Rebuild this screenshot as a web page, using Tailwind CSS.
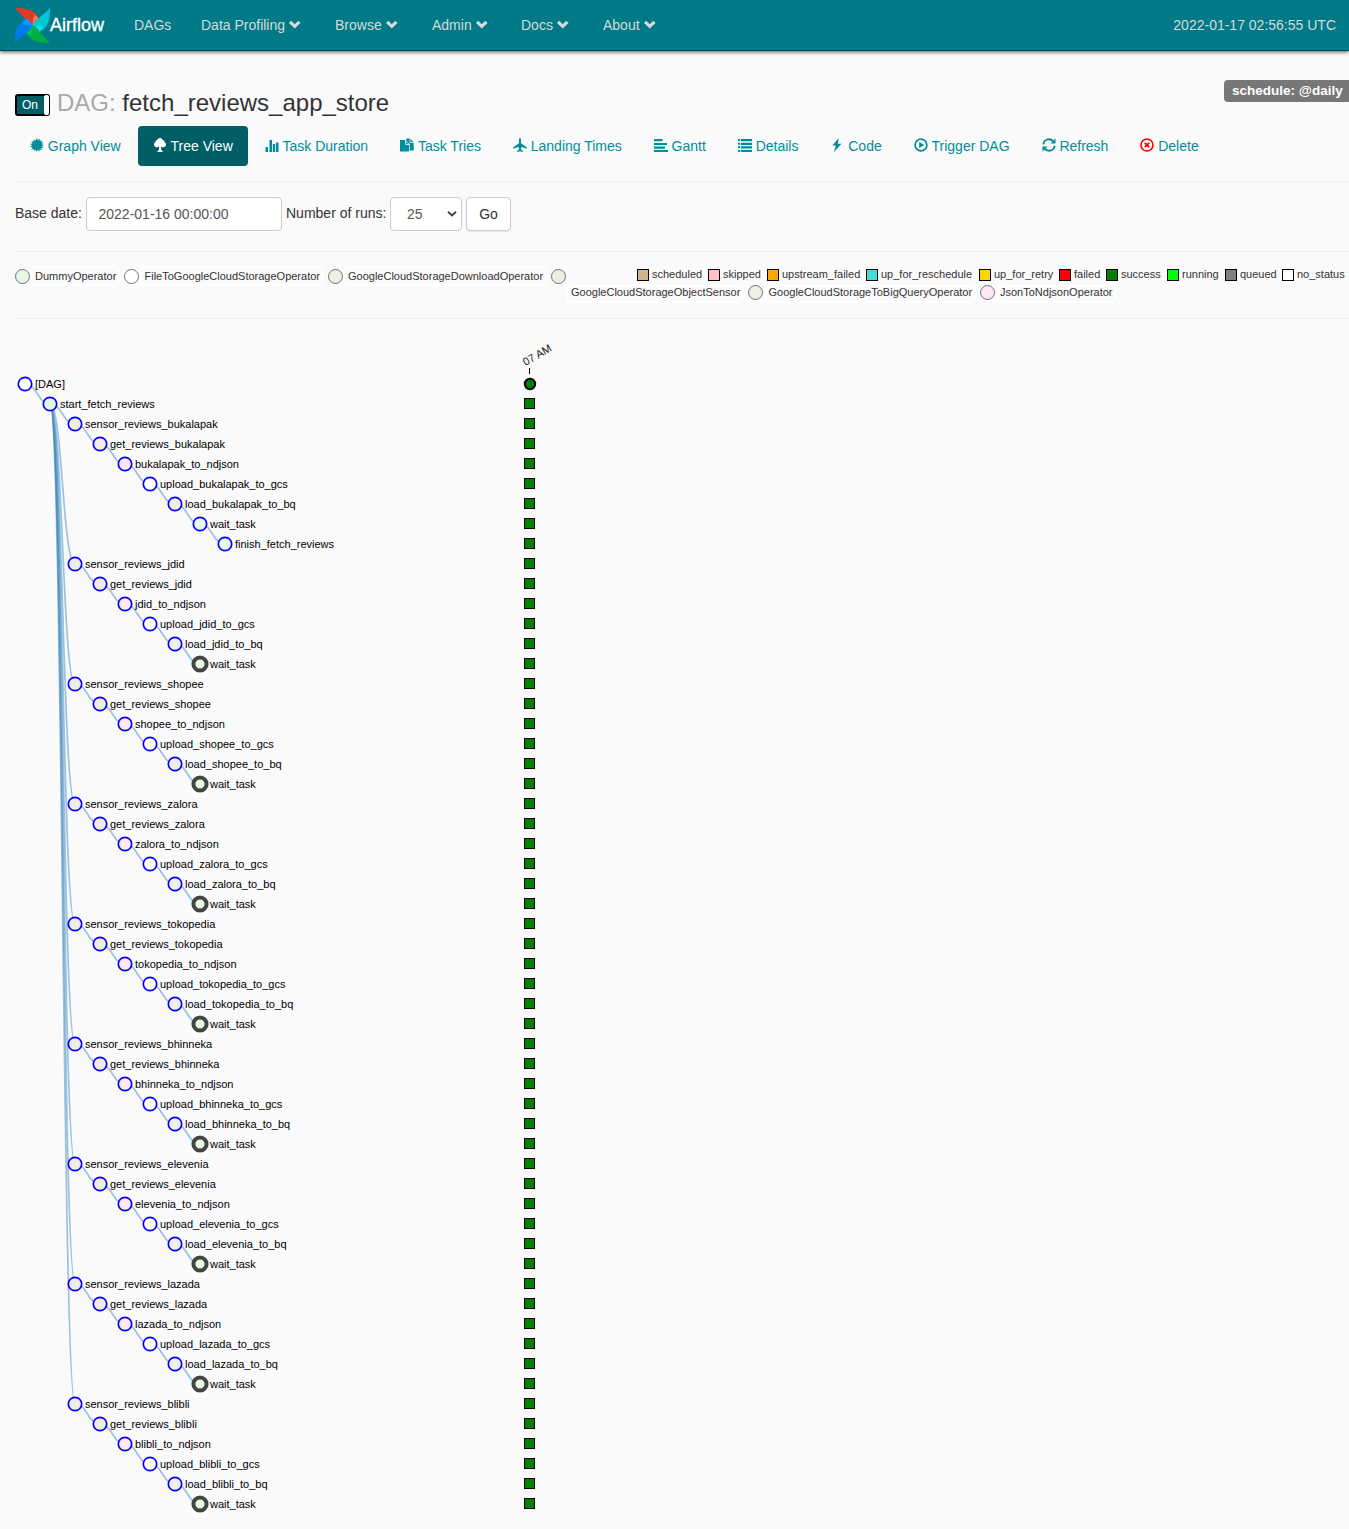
<!DOCTYPE html>
<html lang="en">
<head>
<meta charset="utf-8">
<title>Airflow - DAG: fetch_reviews_app_store</title>
<script src="https://cdn.jsdelivr.net/npm/@tailwindcss/browser@4"></script>
</head>
<body class="w-[1349px] h-[1529px] overflow-hidden bg-[#fafafa] font-['Liberation_Sans',Arial,sans-serif] text-sm leading-5 text-[#333]">
<svg class="hidden">
  <symbol id="chev" viewBox="0 0 14 14"><path d="M1 5.200 3.300 2.900 7 6.400 10.700 2.900 13 5.200 7 10.900z"/></symbol>
  <symbol id="graph" viewBox="0 0 14 14"><path d="M7 0 7.900 2.400 9.700.6 9.800 3.100 12.200 1.900 11.100 4.200 13.700 4.300 11.700 6.100 14 7.200 11.600 8.100 13.400 9.900 10.900 10 11.900 12.200 9.600 11.300 9.300 13.700 7.600 11.800 6.400 14 5.600 11.600 3.700 13.300 3.700 10.700 1.400 11.500 2.500 9.300 0 8.800 2.100 7.400.1 5.700 2.600 5.500 1.200 3.200 3.700 3.700 3.400 1.200 5.400 2.700z"/></symbol>
  <symbol id="tree" viewBox="0 0 14 14"><path d="M7 0c1.6 0 2.4.8 2.6 1.9 1.5.2 2.1 1.1 1.9 2.2 1 .6 1.500 1.400 1.500 2.400 0 1.800-1.400 2.800-3 2.800-.8 0-1.400-.2-1.900-.7v3.400l1.600.9V14H4.400v-1.100L6 12V8.600c-.5.5-1.200.7-2 .7-1.700 0-3-1-3-2.800 0-1 .5-1.800 1.500-2.400-.2-1.100.4-2 1.900-2.200C4.600.8 5.400 0 7 0z"/></symbol>
  <symbol id="bars" viewBox="0 0 14 14"><path d="M.5 8H3v5H.5zM4.500 1H7v12H4.500zM7.800 5h2.400v8H7.800zM11 3.500h2.500V13H11z"/></symbol>
  <symbol id="dup" viewBox="0 0 14 14"><path d="M0 2h5l.8.9V7H9v6.500H0z"/><path d="M6.300.5h3.400V5h4v7.500H9.700V6.300L6.300 3.500zM10.500.7l3.200 3.500h-3.200z"/><path d="M5.500 2.400 9 6.400H5.500z" stroke="#fafafa" stroke-width=".7"/></symbol>
  <symbol id="plane" viewBox="0 0 14 14"><path d="M6 1.500C6.200.5 6.600 0 7 0s.8.500 1 1.500v3.700l5.700 4v1.600L8.400 8.800 8.100 11.400l1.900 1.500V14L7.600 13.300 7 14l-.6-.7L4 14v-1.100l1.900-1.500-.3-2.600L.3 10.800V9.200l5.700-4z"/></symbol>
  <symbol id="gantt" viewBox="0 0 14 14"><path d="M0 0h8.500v2.200H0zM0 4h13v2H0zM0 7.500h11v2.200H0zM0 11h14v2H0z"/></symbol>
  <symbol id="list" viewBox="0 0 14 14"><path d="M0 0h2.200v2H0zM3 0h11v2.200H3zM0 3.700h2.200v2H0zM3 3.700h11v2.300H3zM0 7.300h2.200v2H0zM3 7.300h11v2.300H3zM0 11h2.200v2H0zM3 11h11v2H3z"/></symbol>
  <symbol id="flash" viewBox="0 0 14 14"><path d="M8.800 0 2.300 7.600h3.500L4 14l7.500-8.200H7.800z"/></symbol>
  <symbol id="play" viewBox="0 0 14 14"><circle cx="7" cy="7" r="5.900" fill="none" stroke="currentColor" stroke-width="1.700"/><path d="M5.200 4 10.200 7l-5 3z"/></symbol>
  <symbol id="refresh" viewBox="0 0 14 14"><path d="M1.400 6.400C1.500 3.400 4 1.300 7 1.300c1.900 0 3.300.8 4.300 2M12.600 7.600c-.1 3-2.600 5.100-5.600 5.100-1.900 0-3.300-.8-4.300-2" fill="none" stroke="currentColor" stroke-width="1.900"/><path d="M13.500.4v5H8.500zM.5 13.600v-5h5z"/></symbol>
  <symbol id="del" viewBox="0 0 14 14"><circle cx="7" cy="7" r="6" fill="none" stroke="currentColor" stroke-width="1.600"/><path d="M4.800 4.800l4.400 4.400M9.200 4.800 4.800 9.200" stroke="currentColor" stroke-width="1.900"/></symbol>
  <symbol id="blade" viewBox="0 0 35 35"><path d="M0 0C12 0 21.500 2 24.500 12.500L17.500 17.500C12 17 11 10 0 0z"/></symbol>
  <symbol id="fold" viewBox="0 0 35 35"><path d="M19.500 7C22.500 8.500 24 10.500 24.500 12.500L17.500 17.500C17.800 13.500 18 10 19.500 7z"/></symbol>
</svg>

<nav class="flex h-[51px] items-center border-b border-[#004a52] bg-[#007a87] pl-[15px] pr-[13px] text-[#d9d9d9] shadow-[0_1px_4px_rgba(0,0,0,0.65)]">
  <svg class="size-[35px] shrink-0" viewBox="0 0 35 35">
    <g><use href="#blade" width="35" height="35" fill="#e43921"/><use href="#fold" width="35" height="35" fill="#ff7557"/></g>
    <g transform="rotate(90 17.5 17.5)"><use href="#blade" width="35" height="35" fill="#00c7d4"/><use href="#fold" width="35" height="35" fill="#11e1ee"/></g>
    <g transform="rotate(180 17.5 17.5)"><use href="#blade" width="35" height="35" fill="#00ad46"/><use href="#fold" width="35" height="35" fill="#04c659"/></g>
    <g transform="rotate(270 17.5 17.5)"><use href="#blade" width="35" height="35" fill="#017cee"/><use href="#fold" width="35" height="35" fill="#0c96ff"/></g>
  </svg>
  <span class="w-[84px] text-lg text-white [-webkit-text-stroke:0.3px_white]">Airflow</span>
  <span class="w-[67px]">DAGs</span>
  <span class="flex w-[134px] items-center gap-[3px]">Data Profiling <svg class="size-[13.5px] fill-current"><use href="#chev"/></svg></span>
  <span class="flex w-[97px] items-center gap-[3px]">Browse <svg class="size-[13.5px] fill-current"><use href="#chev"/></svg></span>
  <span class="flex w-[89px] items-center gap-[3px]">Admin <svg class="size-[13.5px] fill-current"><use href="#chev"/></svg></span>
  <span class="flex w-[82px] items-center gap-[3px]">Docs <svg class="size-[13.5px] fill-current"><use href="#chev"/></svg></span>
  <span class="flex items-center gap-[3px]">About <svg class="size-[13.5px] fill-current"><use href="#chev"/></svg></span>
  <span class="ml-auto">2022-01-17 02:56:55 UTC</span>
</nav>

<main class="pl-[15px]">
  <header class="flex h-[75px] items-start pt-[29px]">
    <div class="mt-[14px] flex h-[22px] w-[35px] rounded-[3px] border-2 border-black bg-[#005e66] text-xs leading-[19px] text-white">
      <span class="w-[27px] pl-[5px]">On</span><span class="-my-px -mr-px flex-1 rounded-[2px] bg-white"></span>
    </div>
    <h3 class="ml-[7px] mt-[10px] text-2xl leading-[26px]"><span class="text-[#aaa]">DAG:</span> fetch_reviews_app_store</h3>
    <span class="ml-auto h-[22px] w-[125px] rounded-l-[4px] bg-[#777] pl-2 text-[13.5px] font-bold leading-[21px] text-white">schedule: @daily</span>
  </header>

  <ul class="flex h-10 gap-[2px] text-[#018d9c] [&>li]:flex [&>li]:items-center [&>li]:gap-[3.8px] [&>li]:px-[15px] [&_svg]:size-[14px] [&_svg]:fill-current">
    <li><svg class="-mt-[2px]"><use href="#graph"/></svg>Graph View</li>
    <li class="rounded bg-[#005e66] text-white"><svg class="-mt-[2px]"><use href="#tree"/></svg>Tree View</li>
    <li><svg><use href="#bars"/></svg>Task Duration</li>
    <li><svg class="-mt-[2px]"><use href="#dup"/></svg>Task Tries</li>
    <li><svg class="-mt-[2px]"><use href="#plane"/></svg>Landing Times</li>
    <li><svg><use href="#gantt"/></svg>Gantt</li>
    <li><svg><use href="#list"/></svg>Details</li>
    <li><svg class="-mt-[2px]"><use href="#flash"/></svg>Code</li>
    <li><svg class="-mt-[2px]"><use href="#play"/></svg>Trigger DAG</li>
    <li><svg class="-mt-[2px]"><use href="#refresh"/></svg>Refresh</li>
    <li><svg class="-mt-[2px] text-[#f00]"><use href="#del"/></svg>Delete</li>
  </ul>

  <form class="mt-[15px] flex h-[70px] border-t border-[#eee] pt-[15px]">
    <label class="w-[71px] pt-[6px]">Base date:</label>
    <span class="h-[34px] w-[196px] rounded border border-[#ccc] bg-white px-[11.5px] py-[6px] text-[#555]">2022-01-16 00:00:00</span>
    <label class="w-[108px] pl-1 pt-[6px]">Number of runs:</label>
    <span class="flex h-[34px] w-[72px] items-center justify-between rounded border border-[#ccc] bg-white pl-4 pr-1 text-[#555]">25
      <svg class="h-[6px] w-[10px] fill-none stroke-[#444] stroke-2" viewBox="0 0 10 6"><path d="M1 .8 5 4.500 9 .8"/></svg></span>
    <span class="ml-1 h-[34px] w-[45px] rounded border border-[#ccc] bg-white pt-[6px] text-center shadow-[0_1px_1px_rgba(0,0,0,0.08)]">Go</span>
  </form>

  <section class="h-[67px] border-t border-[#eee] pt-[15px] text-[11px] leading-4">
    <div class="flex h-[19px] whitespace-nowrap">
      <span class="mt-[2px] size-[15px] rounded-full border border-gray-500 bg-[#e8f7e4]"></span>
      <span class="-mt-px h-5 w-[90px] rounded-md border-2 border-white pl-[3px]">DummyOperator</span>
      <span class="ml-[4px] mt-[2px] size-[15px] rounded-full border border-gray-500 bg-white"></span>
      <span class="-mt-px h-5 w-[184px] rounded-md border-2 border-white pl-[3.5px]">FileToGoogleCloudStorageOperator</span>
      <span class="ml-[5px] mt-[2px] size-[15px] rounded-full border border-gray-500 bg-[#f0ede4]"></span>
      <span class="-mt-px h-5 w-[204px] rounded-md border-2 border-white pl-[3px]">GoogleCloudStorageDownloadOperator</span>
      <span class="ml-[4px] mt-[2px] size-[15px] rounded-full border border-gray-500 bg-[#f0ede4]"></span>
      <div id="states" class="ml-[71px] flex flex-1 items-start"></div>
    </div>
    <div class="flex h-[18px] whitespace-nowrap pl-[551px]">
      <span class="-mt-[1px] h-[18px] w-[178px] rounded-md border-2 border-white pl-[3px] leading-[11px]">GoogleCloudStorageObjectSensor</span>
      <span class="ml-1 -mt-px size-[15px] rounded-full border border-gray-500 bg-[#f0ede4]"></span>
      <span class="ml-[2px] -mt-[1px] h-[18px] w-[211px] rounded-md border-2 border-white pl-[1.5px] leading-[11px]">GoogleCloudStorageToBigQueryOperator</span>
      <span class="ml-[4px] -mt-px size-[15px] rounded-full border border-gray-500 bg-[#ffe8f4]"></span>
      <span class="ml-[2px] -mt-[1px] h-[18px] w-[120px] rounded-md border-2 border-white pl-[1px] leading-[11px]">JsonToNdjsonOperator</span>
    </div>
  </section>
  <div class="-ml-[15px]"><div class="ml-[15px] border-t border-[#eee]"></div>
    <svg id="chart" class="block" width="1349" height="1210" viewBox="0 319 1349 1210" font-size="11"></svg>
  </div>
</main>
<script>
// Task instance state legend: name, colour, item width
const states = [['scheduled','tan',71],['skipped','pink',59],['upstream_failed','orange',99],['up_for_reschedule','turquoise',113],['up_for_retry','gold',80],['failed','red',47],['success','green',61],['running','lime',58],['queued','gray',57],['no_status','white',63]];
document.getElementById('states').innerHTML = states.map(([n,c,w]) =>
  `<span class="flex shrink-0 gap-[3px] leading-[14px]" style="width:${w}px"><i class="mt-[2px] size-3 border border-black" style="background:${c}"></i>${n}</span>`).join('');

const op = {dummy:'#e8f7e4', gcs:'#f0ede4', json:'#ffe8f4', plain:'#fff'};
const nodes = [], links = [];
let y = 384;
function add(name, depth, fill, parent, thick) {
  const n = {name, x:25 + depth*25, y, fill, thick};
  nodes.push(n);
  if (parent) links.push([parent, n]);
  y += 20;
  return n;
}
const root = add('[DAG]', 0, op.plain);
const start = add('start_fetch_reviews', 1, op.dummy, root);
['bukalapak','jdid','shopee','zalora','tokopedia','bhinneka','elevenia','lazada','blibli'].forEach((s, i) => {
  let p = add('sensor_reviews_'+s, 2, op.gcs, start);
  p = add('get_reviews_'+s, 3, op.gcs, p);
  p = add(s+'_to_ndjson', 4, op.json, p);
  p = add('upload_'+s+'_to_gcs', 5, op.plain, p);
  p = add('load_'+s+'_to_bq', 6, op.gcs, p);
  p = add('wait_task', 7, op.dummy, p, i > 0);
  if (i === 0) add('finish_fetch_reviews', 8, op.dummy, p);
});
let out = '';
for (const [a, b] of links) {
  const m = (a.x + b.x) / 2;
  out += `<path d="M${a.x},${a.y}C${m},${a.y} ${m},${b.y} ${b.x},${b.y}" fill="none" stroke="#3182bd" stroke-opacity=".47" stroke-width="1.7"/>`;
}
nodes.forEach((n, i) => {
  out += n.thick
    ? `<circle cx="${n.x}" cy="${n.y}" r="6.600" fill="${n.fill}" stroke="#444" stroke-width="4"/>`
    : `<circle cx="${n.x}" cy="${n.y}" r="6.700" fill="${n.fill}" stroke="#0000ff" stroke-width="1.700"/>`;
  out += `<text x="${n.x+10}" y="${n.y+4}" fill="#000">${n.name}</text>`;
  out += i === 0
    ? `<circle cx="530" cy="384" r="5.200" fill="green" stroke="#000" stroke-width="2"/>`
    : `<rect x="524.500" y="${n.y-5.5}" width="10" height="10" fill="green" stroke="#000"/>`;
});
out += `<path d="M529.500 368v6" stroke="#000"/><text transform="translate(525.500 366) rotate(-30)" fill="#222">07 AM</text>`;
document.getElementById('chart').innerHTML = out;
</script>
</body>
</html>
